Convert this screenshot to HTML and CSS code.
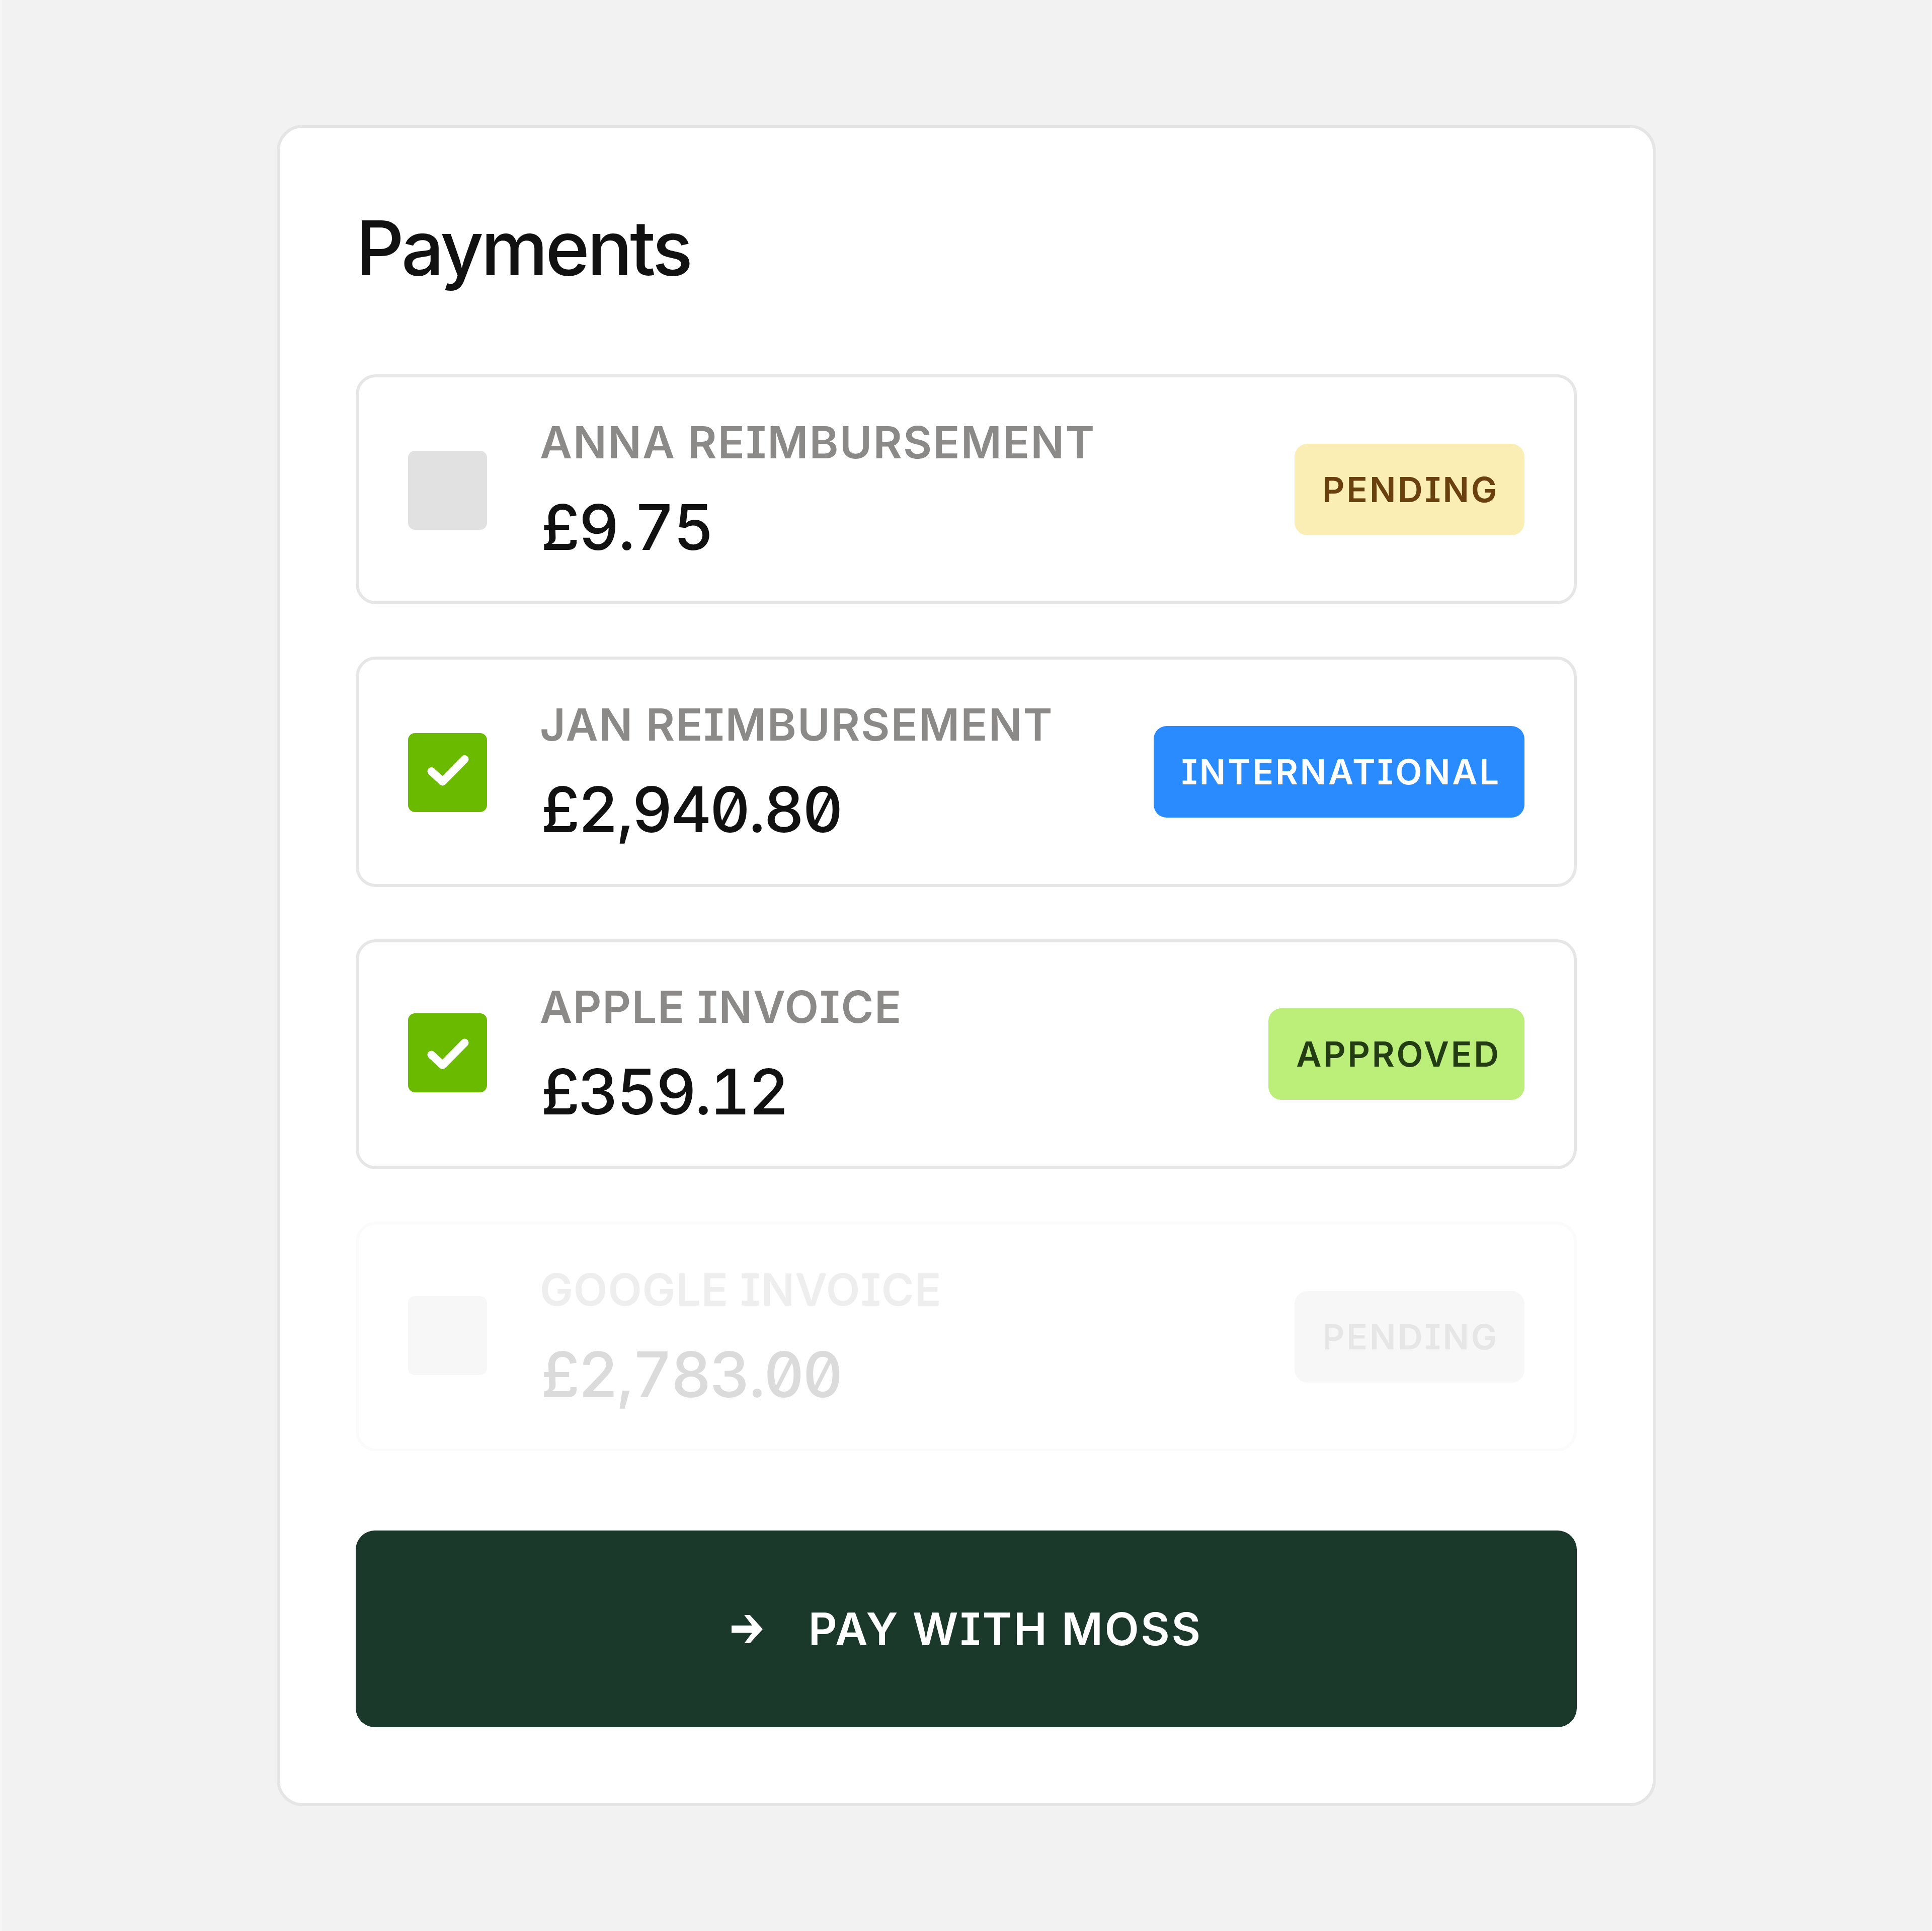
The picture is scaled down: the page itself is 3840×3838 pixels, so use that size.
FILE: index.html
```html
<!DOCTYPE html>
<html lang="en">
<head>
<meta charset="utf-8">
<title>Payments</title>
<link rel="stylesheet" href="styles.css">
</head>
<body class="page">
<main class="card">
  <h1 class="title">Payments</h1>
  <ul class="list">
    <li class="row">
      <span class="check"></span>
      <div class="info">
        <span class="label">ANNA REIMBURSEMENT</span>
        <span class="amount amount-short">£9.75</span>
      </div>
      <span class="badge badge-pending">PENDING</span>
    </li>
    <li class="row">
      <span class="check check-on">
        <svg class="tick" viewBox="0 0 157 157"><path d="M46.5 76 68.5 96.5 112.5 52"/></svg>
      </span>
      <div class="info">
        <span class="label">JAN REIMBURSEMENT</span>
        <span class="amount">£2,940.80</span>
      </div>
      <span class="badge badge-international">INTERNATIONAL</span>
    </li>
    <li class="row">
      <span class="check check-on check-raised">
        <svg class="tick" viewBox="0 0 157 157"><path d="M46.5 82.5 68.5 103 112.5 58.5"/></svg>
      </span>
      <div class="info">
        <span class="label label-snug">APPLE INVOICE</span>
        <span class="amount">£359.12</span>
      </div>
      <span class="badge badge-approved">APPROVED</span>
    </li>
    <li class="row row-faded">
      <span class="check check-raised"></span>
      <div class="info">
        <span class="label label-tight">GOOGLE INVOICE</span>
        <span class="amount">£2,783.00</span>
      </div>
      <span class="badge badge-pending">PENDING</span>
    </li>
  </ul>
  <button class="pay" type="button">
    <svg class="arrow" viewBox="0 0 62 56"><path d="M0 20.7H41L25.3 0H36.5L62 28 36.5 56H25.3L41 35.3H0Z"/></svg>
    <span>PAY WITH MOSS</span>
  </button>
</main>
</body>
</html>
```
FILE: styles.css
```css
* {
  box-sizing: border-box;
}

.page {
  margin: 0;
  height: 3838px;
  padding: 248px 0 0 546px;
  border-left: 4px solid #f7f7f7;
  border-right: 2px solid #f4f4f4;
  background: #f2f2f2;
  color: #111;
  font-family: Inter, "Liberation Sans", sans-serif;
  font-feature-settings: "cv08", "zero";
}

.card {
  display: flex;
  flex-direction: column;
  width: 2741px;
  height: 3342px;
  padding: 164px 151px 0;
  border: 6px solid #e5e5e5;
  border-radius: 52px;
  background: #fff;
}

.title {
  margin: 0 0 176px;
  font-size: 150px;
  line-height: 150px;
  font-weight: 500;
  letter-spacing: -5.2px;
}

.list {
  display: flex;
  flex-direction: column;
  gap: 104px;
  margin: 0 0 157px;
  padding: 0;
  list-style: none;
}

.row {
  display: flex;
  align-items: center;
  height: 457.3px;
  padding: 0 98px;
  border: 6px solid #e6e6e6;
  border-radius: 40px;
}

.check {
  flex: none;
  width: 157px;
  height: 157px;
  margin: 3px 105px 0 0;
  border-radius: 14px;
  background: #e1e1e1;
}

.check-on {
  background: #6aba00;
}

.check-raised {
  margin: 0 105px 5px 0;
}

.tick {
  display: block;
  width: 157px;
  height: 157px;
  fill: none;
  stroke: #fff;
  stroke-width: 16px;
  stroke-linecap: round;
  stroke-linejoin: round;
}

.info {
  display: flex;
  flex: 1;
  flex-direction: column;
  gap: 54px;
  margin-bottom: 4px;
}

.label {
  color: #8c8a88;
  font-size: 88px;
  line-height: 100px;
  font-weight: 600;
  letter-spacing: 2.1px;
}

.label-snug {
  letter-spacing: 1.7px;
}

.label-tight {
  letter-spacing: 0.8px;
}

.amount {
  padding-left: 2px;
  font-size: 125px;
  line-height: 130px;
  font-weight: 500;
  letter-spacing: -3.7px;
  font-feature-settings: "zero", "tnum";
}

.amount-short {
  letter-spacing: -2.4px;
}

.badge {
  min-width: 457px;
  padding: 0 47px 0 55px;
  border-radius: 26px;
  font-size: 69px;
  line-height: 182px;
  font-weight: 600;
  letter-spacing: 3.8px;
}

.badge-pending {
  background: #fbeeb4;
  color: #6a400f;
}

.badge-international {
  background: #298bfd;
  color: #fff;
}

.badge-approved {
  background: #bbef7a;
  color: #243c14;
}

.row-faded {
  border-color: #fbfbfb;
}

.row-faded .check {
  background: #f7f7f7;
}

.row-faded .label {
  color: #eee;
}

.row-faded .amount {
  color: #dbdbdb;
}

.row-faded .badge {
  background: #f7f7f7;
  color: #e6e6e6;
}

.pay {
  display: flex;
  align-items: center;
  justify-content: center;
  gap: 91px;
  height: 391px;
  padding: 0 0 0 2px;
  border: 0;
  border-radius: 38px;
  background: #1b392a;
  color: #fff;
  font: 600 89px/100px Inter, "Liberation Sans", sans-serif;
  font-feature-settings: "cv08", "zero";
  letter-spacing: 3.3px;
}

.arrow {
  width: 62px;
  height: 56px;
  fill: #fff;
}
```
